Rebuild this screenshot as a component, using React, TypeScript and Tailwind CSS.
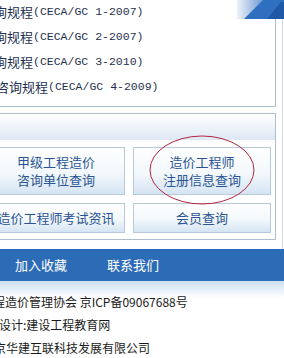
import React from 'react';

const CJK = '"Noto Sans CJK SC", "Liberation Sans", sans-serif';

const GUIDES = [
  { lead: '咨询规程', code: '(CECA/GC 1-2007)', shift: 'ml-0' },
  { lead: '咨询规程', code: '(CECA/GC 2-2007)', shift: 'ml-0' },
  { lead: '咨询规程', code: '(CECA/GC 3-2010)', shift: 'ml-0' },
  { lead: '造价咨询规程', code: '(CECA/GC 4-2009)', shift: 'ml-[-11px]' },
];

function QueryButton({ lines, tall }: { lines: string[]; tall?: boolean }) {
  return (
    <button
      className={`flex flex-col items-center justify-center border border-[#b7c9da] bg-[linear-gradient(#ffffff,#f3f8fc_55%,#d5e4f3)] text-[13px] leading-[18px] text-[#2b5592] ${
        tall ? 'h-[48px]' : 'h-[30px]'
      }`}
    >
      {lines.map((l) => (
        <span key={l} className="whitespace-nowrap">{l}</span>
      ))}
    </button>
  );
}

export default function App() {
  return (
    <div className="relative w-[284px] h-[358px] overflow-hidden bg-white" style={{ fontFamily: CJK }}>
      {/* right column with outer border */}
      <div className="w-[283px] border-r border-[#d2dce4] pb-[9px]">
        {/* standards list */}
        <div className="ml-[-19px] mr-[6px] border-r border-b border-[#adbfcc] pb-[7px]">
          <div className="mt-[-1px]">
            {GUIDES.map((g) => (
              <div key={g.code} className={`h-[25px] flex items-center whitespace-nowrap text-[13px] text-[#1f3150] ${g.shift}`}>
                <span>{g.lead}</span>
                <span className="text-[11.5px]" style={{ fontFamily: '"Liberation Mono", monospace' }}>
                  {g.code}
                </span>
              </div>
            ))}
          </div>
        </div>

        {/* query box */}
        <div className="mt-[6px] ml-[-20px] mr-[6px] border border-[#adbfcc]">
          <div className="h-[26px] bg-[linear-gradient(#ffffff,#dde8f4)]" />
          <div className="grid grid-cols-2 gap-[8px] pt-[7px] pb-[6px] pl-[6px] pr-[4px]">
            <QueryButton tall lines={['甲级工程造价', '咨询单位查询']} />
            <QueryButton tall lines={['造价工程师', '注册信息查询']} />
            <QueryButton lines={['造价工程师考试资讯']} />
            <QueryButton lines={['会员查询']} />
          </div>
        </div>
      </div>

      {/* nav bar */}
      <div className="h-[32px] bg-[#2c6cb6] flex items-center gap-[40px] pl-[15px] text-[13px] text-white">
        <span>加入收藏</span>
        <span>联系我们</span>
      </div>

      {/* footer */}
      <div className="bg-[linear-gradient(#cddff1,#ffffff_17px)] pt-[9px] text-[12px] leading-[23px] text-[#1a1a1a]">
        <div className="ml-[-67px] whitespace-nowrap">中国建设工程造价管理协会 京ICP备09067688号</div>
        <div className="ml-[-25px] whitespace-nowrap">网站设计:建设工程教育网</div>
        <div className="ml-[-18px] whitespace-nowrap">北京华建互联科技发展有限公司</div>
      </div>

      {/* corner graphic */}
      <svg className="absolute left-[237px] top-0" width="47" height="19" viewBox="0 0 47 19">
        <defs>
          <linearGradient id="cg" x1="0" y1="0" x2="1" y2="0">
            <stop offset="0" stopColor="#eef3fa" />
            <stop offset="0.55" stopColor="#6f9bd3" />
          </linearGradient>
        </defs>
        <rect width="47" height="19" fill="url(#cg)" />
        <polygon points="7,19 26,0 47,0 47,19" fill="#2f6fc0" />
        <polygon points="30,19 44,2 47,2 47,19" fill="#1e58a6" />
      </svg>

      {/* hand-drawn red ellipse */}
      <svg className="absolute left-[148px] top-[134px]" width="110" height="74" viewBox="0 0 110 74">
        <ellipse cx="54" cy="36" rx="52" ry="34" fill="none" stroke="#b3263e" strokeWidth="1" />
      </svg>
    </div>
  );
}
